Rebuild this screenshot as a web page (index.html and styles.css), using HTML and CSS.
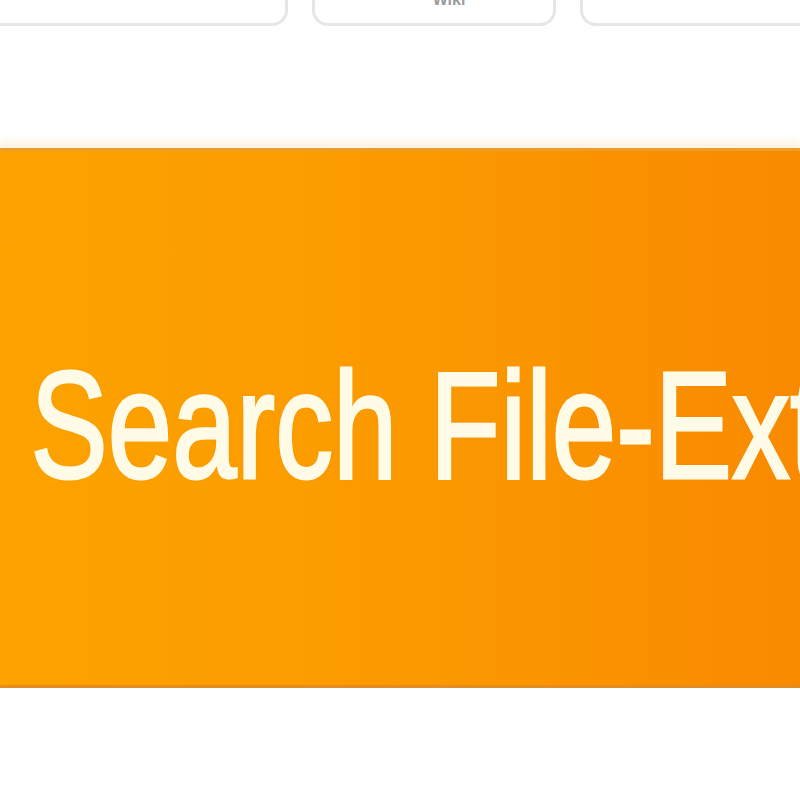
FILE: index.html
```html
<!DOCTYPE html>
<html lang="en">
<head>
    <meta charset="UTF-8">
    <meta name="viewport" content="width=device-width, initial-scale=1.0">
    <title>Search File-Ext</title>
    <link rel="stylesheet" href="styles.css">
</head>
<body>

<nav class="tabs">
    <div class="tab tab-first"></div>
    <div class="tab tab-middle"><span class="tab-label">Wiki</span></div>
    <div class="tab tab-last"></div>
</nav>

<div class="banner">
    <h1 class="banner-title">Search File-Extension</h1>
</div>

</body>
</html>
```

FILE: styles.css
```css
body {
    font-family: 'Liberation Sans', Arial, sans-serif;
    background-color: #fff;
    margin: 0;
    overflow: hidden;
}
.tabs {
    display: flex;
    gap: 24px;
    height: 44px;
    margin-top: -18px;
    margin-left: -30px;
}
.tab {
    border: 3px solid #e6e6e6;
    border-top: none;
    border-radius: 0 0 16px 16px;
    background: #fff;
    display: flex;
    justify-content: center;
    align-items: flex-start;
}
.tab-first {
    width: 312px;
}
.tab-middle {
    width: 238px;
}
.tab-last {
    flex: 1;
    margin-right: -40px;
}
.tab-label {
    font-size: 16px;
    line-height: 16px;
    color: #9a9a9a;
    margin: 10px 0 0 30px;
    font-weight: bold;
}
.banner {
    margin-top: 122px;
    height: 534px;
    background: linear-gradient(to right, #fca300, #fb9a00 50%, #f98a00);
    border-top: 3px solid #eb9c2c;
    border-bottom: 3px solid #e48c20;
    box-shadow: 0 -6px 8px rgba(252, 230, 190, 0.5), 0 6px 8px rgba(252, 230, 190, 0.5);
    overflow: hidden;
}
.banner-title {
    margin: 0;
    padding: 198px 0 0 40px;
    font-size: 152px;
    line-height: 152px;
    font-weight: normal;
    color: #fffbe6;
    white-space: nowrap;
    transform: scaleX(0.762);
    transform-origin: left top;
    -webkit-text-stroke: 3px #fffbe6;
    text-shadow: 0 0 3px rgba(200, 110, 0, 0.45);
}
```
